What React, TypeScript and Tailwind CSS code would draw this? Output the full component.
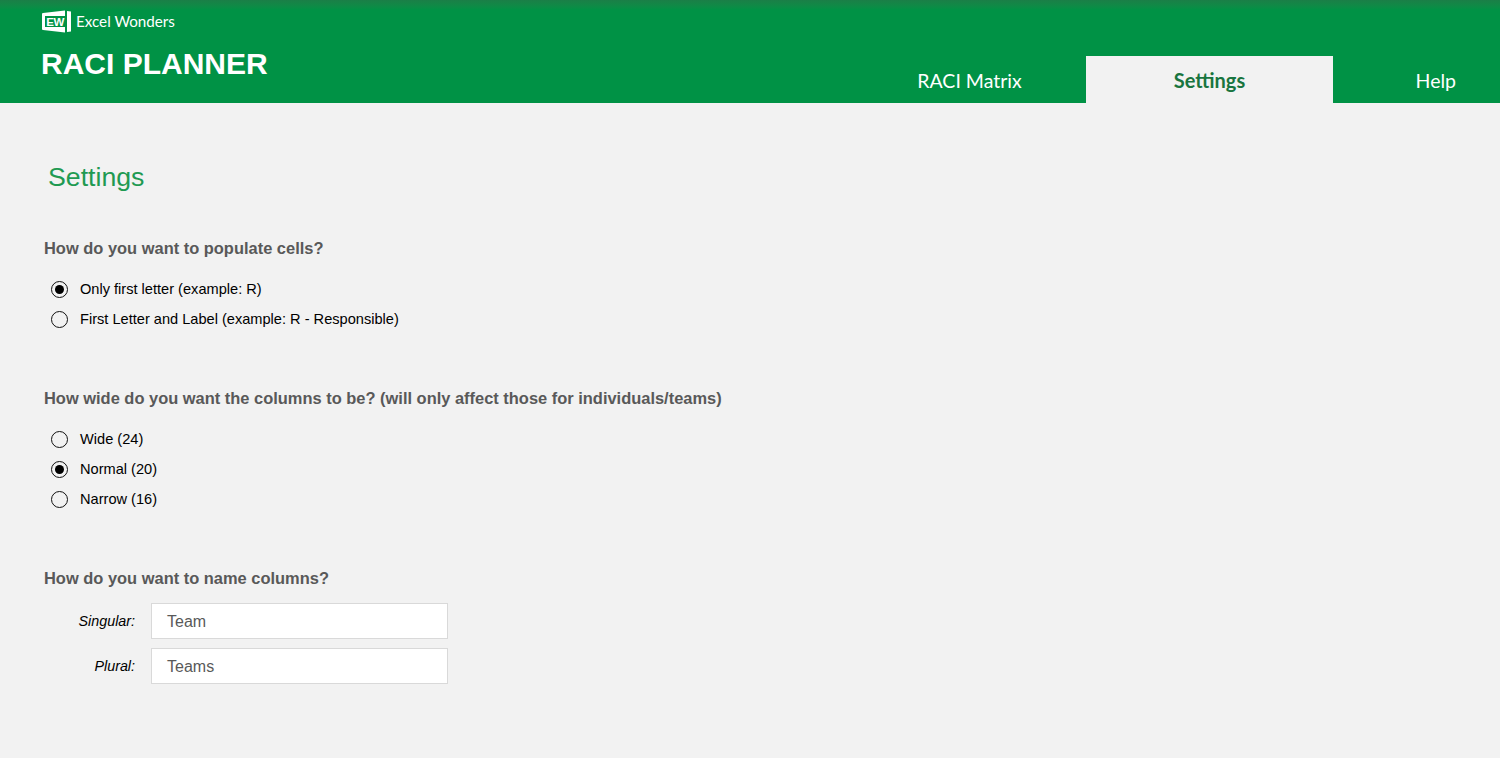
function Radio({ label, checked }: { label: string; checked?: boolean }) {
  return (
    <div className="flex items-center h-[30px] pl-[51px]">
      <span className="w-[17px] h-[17px] rounded-full border border-[#111] bg-[#f2f2f2] flex items-center justify-center">
        {checked && <span className="w-[9px] h-[9px] rounded-full bg-black" />}
      </span>
      <span className="ml-[12px] pt-[2px] text-[14.6px] text-black">{label}</span>
    </div>
  );
}

function NameField({ label, value }: { label: string; value: string }) {
  return (
    <div className="flex items-center h-[36px]">
      <span className="w-[135px] pt-[2px] text-right text-[14.3px] italic text-black">{label}</span>
      <div className="ml-[16px] w-[297px] h-[36px] bg-white border border-[#d9d9d9] pl-[15px] pt-[2px] flex items-center text-[16px] text-[#595959]">
        {value}
      </div>
    </div>
  );
}

function Logo() {
  return (
    <svg width="29" height="23" viewBox="0 0 29 23" className="block">
      <path d="M1 3 L23 0.5 V22.5 L1 20 Q0 20 0 19 V4 Q0 3 1 3 Z" fill="#fff" />
      <path d="M25 1 L29 1.5 V21.5 L25 22 Z" fill="#fff" />
      <rect x="3" y="6" width="20" height="11" fill="#009245" />
      <text x="13" y="15.5" textAnchor="middle" fontSize="11.5" fontWeight="700" fill="#fff" fontFamily="Liberation Sans, sans-serif" letterSpacing="-0.6">EW</text>
    </svg>
  );
}

export default function App() {
  return (
    <div className="min-h-[758px] bg-[#f2f2f2] font-['Liberation_Sans',Arial,sans-serif]">
      <header className="relative h-[103px] bg-[#009245] flex justify-between">
        <div className="absolute inset-x-0 top-0 h-[10px] bg-gradient-to-b from-[#1a7f47] to-[#009245]" />
        <div className="relative pl-[41px] pt-[10px]">
          <div className="flex items-center pl-[1px]">
            <Logo />
            <span className="ml-[5px] pb-[2px] text-[15.2px] leading-[18px] text-white font-['Lato',sans-serif]">Excel Wonders</span>
          </div>
          <h1 className="mt-[12px] text-[30px] leading-[37px] font-bold text-white">RACI PLANNER</h1>
        </div>
        <nav className="relative flex items-end font-['Lato',sans-serif] text-[19.5px]">
          <div className="w-[233px] h-[47px] pt-[2px] flex items-center justify-center text-white">RACI Matrix</div>
          <div className="w-[247px] h-[47px] flex items-center justify-center bg-[#f2f2f2] text-[#19753f] font-bold text-[20px]">Settings</div>
          <div className="w-[167px] h-[47px] pt-[2px] flex items-center justify-end pr-[44px] text-white">Help</div>
        </nav>
      </header>

      <main className="pl-[44px] pt-[58px]">
        <h2 className="pl-[4px] text-[26.7px] leading-[32px] text-[#1f9a52]">Settings</h2>

        <section className="mt-[46px]">
          <h3 className="text-[16.45px] leading-[18px] font-bold text-[#595959]">How do you want to populate cells?</h3>
          <div className="mt-[17px] -ml-[44px]">
            <Radio label="Only first letter (example: R)" checked />
            <Radio label="First Letter and Label (example: R - Responsible)" />
          </div>
        </section>

        <section className="mt-[55px]">
          <h3 className="text-[16.45px] leading-[18px] font-bold text-[#595959]">How wide do you want the columns to be? (will only affect those for individuals/teams)</h3>
          <div className="mt-[17px] -ml-[44px]">
            <Radio label="Wide (24)" />
            <Radio label="Normal (20)" checked />
            <Radio label="Narrow (16)" />
          </div>
        </section>

        <section className="mt-[55px]">
          <h3 className="text-[16.45px] leading-[18px] font-bold text-[#595959]">How do you want to name columns?</h3>
          <div className="mt-[16px] -ml-[44px] flex flex-col gap-[9px]">
            <NameField label="Singular:" value="Team" />
            <NameField label="Plural:" value="Teams" />
          </div>
        </section>
      </main>
    </div>
  );
}
